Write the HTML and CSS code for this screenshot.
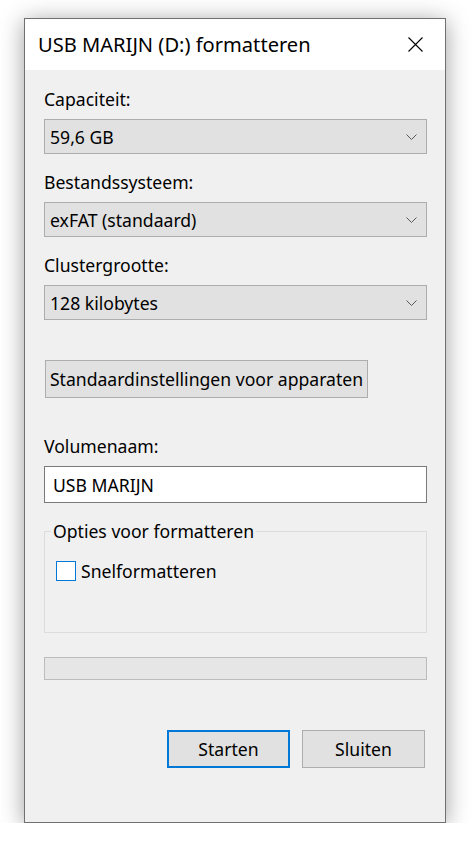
FILE: index.html
```html
<!DOCTYPE html>
<html lang="nl">
<head>
<meta charset="utf-8">
<title>USB MARIJN (D:) formatteren</title>
<link rel="stylesheet" href="styles.css">
</head>
<body>
<div class="dialog">
  <div class="titlebar">
    <span class="title">USB MARIJN (D:) formatteren</span>
    <svg class="close" width="15" height="15" viewBox="0 0 15 15" aria-hidden="true">
      <path d="M0.5 0.5 L14.5 14.5 M14.5 0.5 L0.5 14.5" stroke="#000" stroke-width="1.1" fill="none"/>
    </svg>
  </div>
  <div class="content">
    <div class="field first">
      <div class="label">Capaciteit:</div>
      <div class="combo"><span>59,6 GB</span><svg class="chev" width="11" height="6" viewBox="0 0 11 6"><path d="M0.5 0.5 L5.5 5.5 L10.5 0.5" stroke="#5a5a5a" stroke-width="1" fill="none"/></svg></div>
    </div>
    <div class="field">
      <div class="label">Bestandssysteem:</div>
      <div class="combo"><span>exFAT (standaard)</span><svg class="chev" width="11" height="6" viewBox="0 0 11 6"><path d="M0.5 0.5 L5.5 5.5 L10.5 0.5" stroke="#5a5a5a" stroke-width="1" fill="none"/></svg></div>
    </div>
    <div class="field">
      <div class="label">Clustergrootte:</div>
      <div class="combo"><span>128 kilobytes</span><svg class="chev" width="11" height="6" viewBox="0 0 11 6"><path d="M0.5 0.5 L5.5 5.5 L10.5 0.5" stroke="#5a5a5a" stroke-width="1" fill="none"/></svg></div>
    </div>
    <div class="defaults-row"><div class="btn defaults">Standaardinstellingen voor apparaten</div></div>
    <div class="field volume">
      <div class="label">Volumenaam:</div>
      <div class="textbox">USB MARIJN</div>
    </div>
    <fieldset class="group">
      <legend>Opties voor formatteren</legend>
      <div class="check-row"><span class="checkbox"></span><span class="check-label">Snelformatteren</span></div>
    </fieldset>
    <div class="progress"></div>
    <div class="actions">
      <div class="btn action primary">Starten</div>
      <div class="btn action">Sluiten</div>
    </div>
  </div>
</div>
</body>
</html>
```
FILE: styles.css
```css
html, body {
  margin: 0;
  padding: 0;
  background: #ffffff;
}
body {
  font-family: "Noto Sans", "Open Sans", sans-serif;
  color: #000;
  font-size: 17.6px;
}
.dialog {
  box-sizing: border-box;
  margin: 18px 0 0 24px;
  width: 422px;
  height: 805px;
  border: 1px solid #707070;
  background: #f0f0f0;
  box-shadow: 0 3px 22px rgba(0, 0, 0, 0.38);
  display: flex;
  flex-direction: column;
}
.titlebar {
  height: 51px;
  background: #ffffff;
  display: flex;
  align-items: center;
  justify-content: space-between;
  padding: 0 22px 0 13px;
}
.title {
  font-size: 20.1px;
  line-height: 26px;
}
.close { display: block; }
.content {
  padding: 0 18px 0 19px;
  display: flex;
  flex-direction: column;
}
.field { margin-top: 15px; }
.field.first { margin-top: 16px; }
.label {
  line-height: 26px;
  height: 26px;
  margin-bottom: 7px;
}
.combo {
  box-sizing: border-box;
  height: 35px;
  background: #e1e1e1;
  border: 1px solid #adadad;
  display: flex;
  align-items: center;
  justify-content: space-between;
  padding: 0 9px 0 5px;
  line-height: 26px;
}
.chev { display: block; }
.defaults-row {
  margin-top: 40px;
  display: flex;
}
.btn {
  box-sizing: border-box;
  background: #e1e1e1;
  border: 1px solid #adadad;
  display: flex;
  align-items: center;
  justify-content: center;
  line-height: 26px;
}
.defaults {
  margin-left: 1px;
  width: 323px;
  height: 38px;
}
.field.volume { margin-top: 35px; }
.textbox {
  box-sizing: border-box;
  height: 37px;
  background: #ffffff;
  border: 1px solid #7a7a7a;
  padding: 0 8px;
  display: flex;
  align-items: center;
  line-height: 26px;
}
.group {
  margin: 15px 0 0 0;
  padding: 14px 0 48px 11px;
  border: 1px solid #dcdcdc;
  min-width: 0;
}
.group legend {
  margin-left: -5px;
  padding: 0 2px;
  line-height: 26px;
}
.check-row {
  display: flex;
  align-items: center;
  height: 26px;
}
.checkbox {
  box-sizing: border-box;
  width: 20px;
  height: 20px;
  background: #ffffff;
  border: 1px solid #0078d7;
  margin-right: 5px;
}
.progress {
  box-sizing: border-box;
  margin-top: 24px;
  height: 23px;
  background: #e6e6e6;
  border: 1px solid #bcbcbc;
}
.actions {
  margin-top: 50px;
  display: flex;
  justify-content: flex-end;
  gap: 12px;
  padding-right: 2px;
}
.action {
  width: 123px;
  height: 38px;
}
.action.primary {
  border: 2px solid #0078d7;
}
```
